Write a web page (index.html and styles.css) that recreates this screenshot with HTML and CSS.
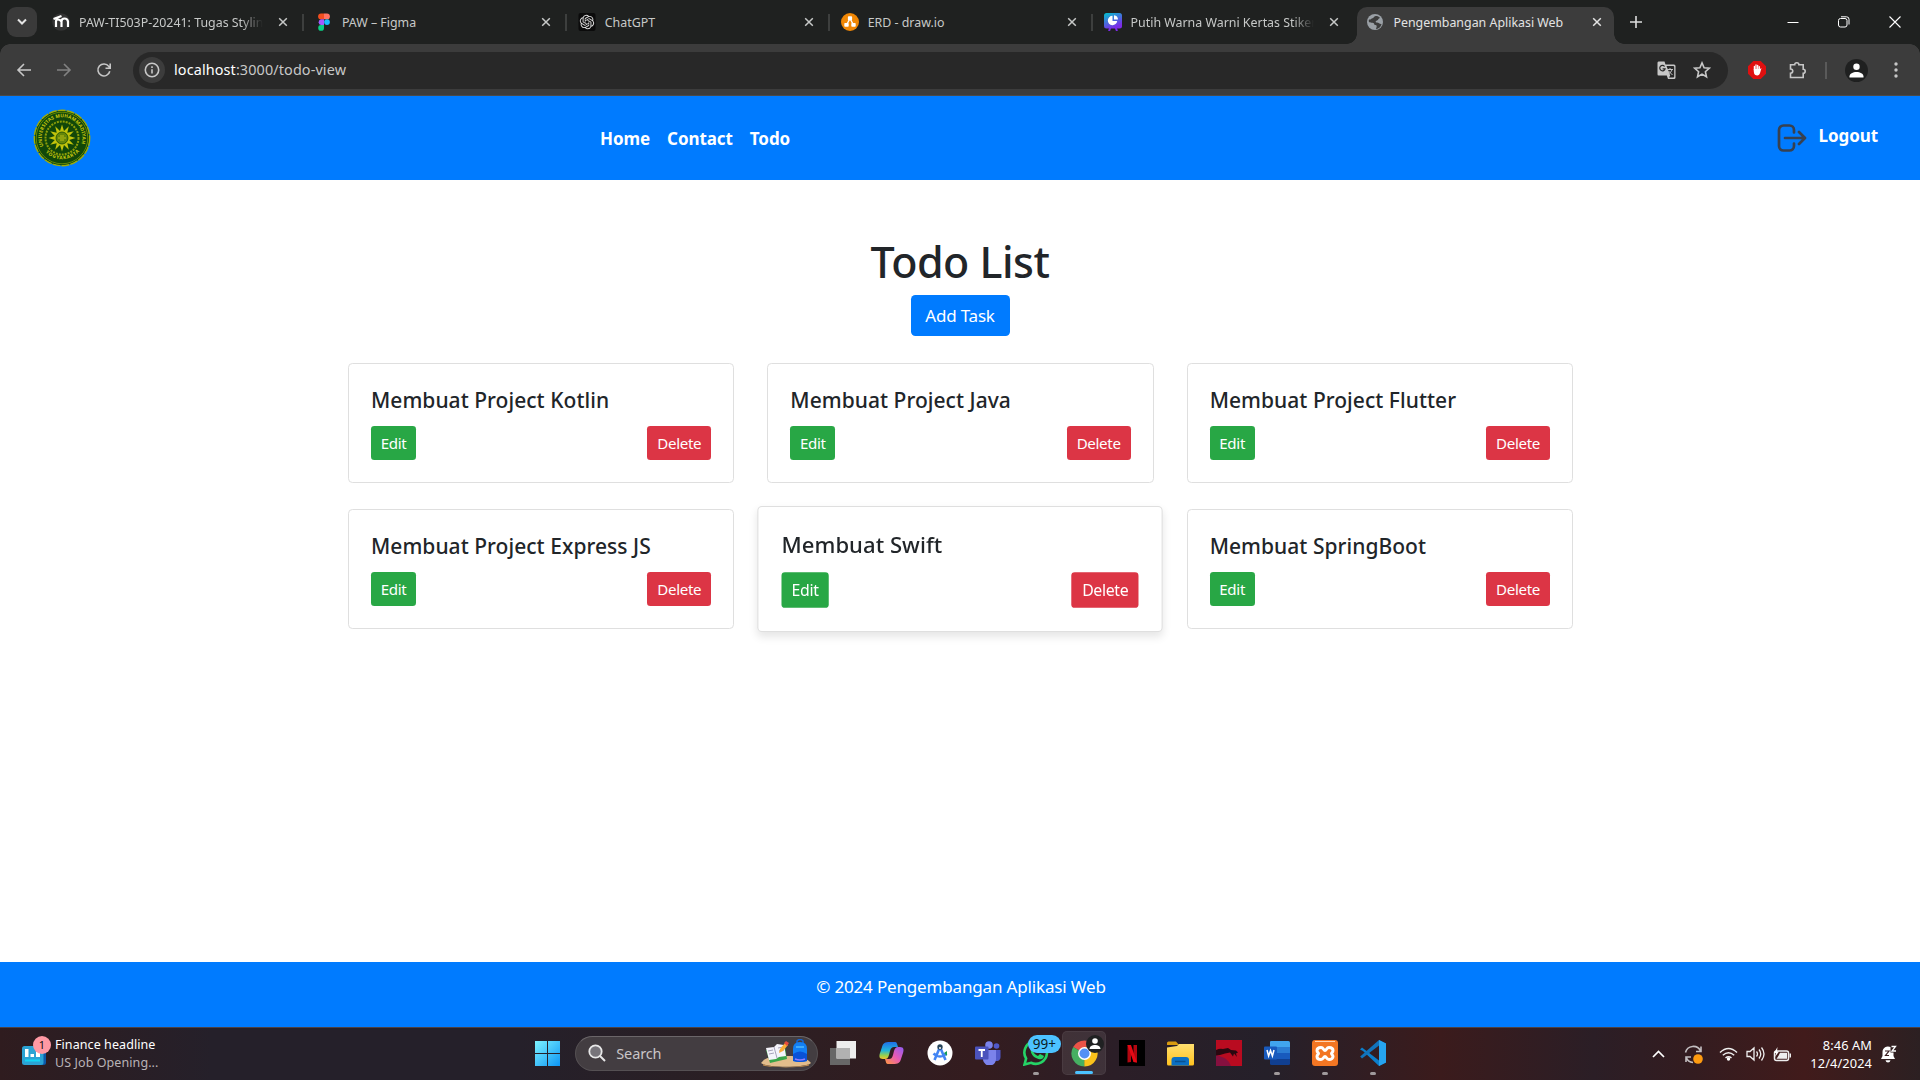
FILE: index.html
```html
<!DOCTYPE html>
<html lang="id">
<head>
<meta charset="utf-8">
<title>Pengembangan Aplikasi Web</title>
<link rel="stylesheet" href="styles.css">
</head>
<body>
<svg class="defs" width="0" height="0">
  <symbol id="x" viewBox="0 0 10 10"><path d="M1.2 1.2l7.6 7.6M8.8 1.2L1.2 8.8" stroke="currentColor" stroke-width="1.5" fill="none"/></symbol>
  <linearGradient id="gWin" x1="0" y1="0" x2="1" y2="1"><stop offset="0" stop-color="#7df3ff"/><stop offset="1" stop-color="#0c95f5"/></linearGradient>
  <linearGradient id="gCanva" x1="0" y1="0" x2=".5" y2="1"><stop offset="0" stop-color="#00c4cc"/><stop offset="1" stop-color="#7d2ae8"/></linearGradient>
  <linearGradient id="gCopA" x1="0" y1="0" x2="0" y2="1"><stop offset="0" stop-color="#1f6fe8"/><stop offset=".5" stop-color="#22b5d8"/><stop offset=".8" stop-color="#9bd14b"/><stop offset="1" stop-color="#f3c52e"/></linearGradient>
  <linearGradient id="gCopB" x1="1" y1="0" x2="0" y2="1"><stop offset="0" stop-color="#8f5cf5"/><stop offset=".5" stop-color="#e85ab4"/><stop offset="1" stop-color="#ff9a3c"/></linearGradient>
  <linearGradient id="gFold" x1="0" y1="0" x2="0" y2="1"><stop offset="0" stop-color="#ffdf70"/><stop offset="1" stop-color="#ffc21f"/></linearGradient>
</svg>

<div class="tabstrip">
  <div class="tab-search"><svg width="10" height="8" viewBox="0 0 10 8"><path d="M1 1.5l4 4 4-4" fill="none" stroke="#e3e3e3" stroke-width="2"/></svg></div>
  <div class="tabs">
    <div class="tab"><svg class="fav" viewBox="0 0 18 18"><circle cx="9" cy="9" r="8.800" fill="#333"/><path d="M4 14V8.500Q4 6.500 6 6.500T9.500 8.500V14M9.500 8.500Q9.500 5.500 12.500 5.500T16 8.500V14M1.500 6l8-3" fill="none" stroke="#fff" stroke-width="2.200"/></svg><span class="tab-title faded">PAW-TI503P-20241: Tugas Styling</span><svg class="close"><use href="#x"/></svg></div>
    <div class="tab"><svg class="fav" viewBox="0 0 18 18"><path d="M9 .5H6a2.900 2.900 0 0 0 0 5.800h3z" fill="#f24e1e"/><path d="M9 .5h3a2.900 2.900 0 0 1 0 5.800H9z" fill="#ff7262"/><path d="M9 6.300H6a2.900 2.900 0 0 0 0 5.700h3z" fill="#a259ff"/><circle cx="12" cy="9.100" r="2.900" fill="#1abcfe"/><path d="M9 12H6a2.900 2.900 0 1 0 3 2.900z" fill="#0acf83"/></svg><span class="tab-title">PAW – Figma</span><svg class="close"><use href="#x"/></svg></div>
    <div class="tab"><svg class="fav" viewBox="0 0 18 18"><rect x=".5" width="17" height="18" rx="2" fill="#0b0b0b"/><path transform="translate(1.800 1.800) scale(.6)" fill="#dcdcdc" d="M22.2819 9.8211a5.9847 5.9847 0 0 0-.5157-4.9108 6.0462 6.0462 0 0 0-6.5098-2.9A6.0651 6.0651 0 0 0 4.9807 4.1818a5.9847 5.9847 0 0 0-3.9977 2.9 6.0462 6.0462 0 0 0 .7427 7.0966 5.98 5.98 0 0 0 .511 4.9107 6.051 6.051 0 0 0 6.5146 2.9001A5.9847 5.9847 0 0 0 13.2599 24a6.0557 6.0557 0 0 0 5.7718-4.2058 5.9894 5.9894 0 0 0 3.9977-2.9001 6.0557 6.0557 0 0 0-.7475-7.0729zm-9.022 12.6081a4.4755 4.4755 0 0 1-2.8764-1.0408l.1419-.0804 4.7783-2.7582a.7948.7948 0 0 0 .3927-.6813v-6.7369l2.02 1.1686a.071.071 0 0 1 .038.052v5.5826a4.504 4.504 0 0 1-4.4945 4.4944zm-9.6607-4.1254a4.4708 4.4708 0 0 1-.5346-3.0137l.142.0852 4.783 2.7582a.7712.7712 0 0 0 .7806 0l5.8428-3.3685v2.3324a.0804.0804 0 0 1-.0332.0615L9.74 19.9502a4.4992 4.4992 0 0 1-6.1408-1.6464zM2.3408 7.8956a4.485 4.485 0 0 1 2.3655-1.9728V11.6a.7664.7664 0 0 0 .3879.6765l5.8144 3.3543-2.0201 1.1685a.0757.0757 0 0 1-.071 0l-4.8303-2.7865A4.504 4.504 0 0 1 2.3408 7.872zm16.5963 3.8558L13.1038 8.364 15.1192 7.2a.0757.0757 0 0 1 .071 0l4.8303 2.7913a4.4944 4.4944 0 0 1-.6765 8.1042v-5.6772a.79.79 0 0 0-.407-.667zm2.0107-3.0231l-.142-.0852-4.7735-2.7818a.7759.7759 0 0 0-.7854 0L9.409 9.2297V6.8974a.0662.0662 0 0 1 .0284-.0615l4.8303-2.7866a4.4992 4.4992 0 0 1 6.6802 4.66zM8.3065 12.863l-2.02-1.1638a.0804.0804 0 0 1-.038-.0567V6.0742a4.4992 4.4992 0 0 1 7.3757-3.4537l-.142.0805L8.704 5.459a.7948.7948 0 0 0-.3927.6813zm1.0976-2.3654l2.602-1.4998 2.6069 1.4998v2.9994l-2.5974 1.4997-2.6067-1.4997Z"/></svg><span class="tab-title">ChatGPT</span><svg class="close"><use href="#x"/></svg></div>
    <div class="tab"><svg class="fav" viewBox="0 0 18 18"><circle cx="9" cy="9" r="9" fill="#f08705"/><path d="M9 5.500l-3.500 6.500M9 5.500l3.500 6.500" stroke="#fff" stroke-width="1.400"/><rect x="6.900" y="3.300" width="4.200" height="4" rx=".8" fill="#fff"/><rect x="3.300" y="10" width="4.400" height="3.800" rx=".8" fill="#fff"/><rect x="10.300" y="10" width="4.400" height="3.800" rx=".8" fill="#fff"/></svg><span class="tab-title">ERD - draw.io</span><svg class="close"><use href="#x"/></svg></div>
    <div class="tab"><svg class="fav" viewBox="0 0 18 18"><path d="M6.500 14L5 18M11.500 14l1.500 4" stroke="#7d2ae8" stroke-width="2"/><rect width="18" height="15.500" rx="2.500" fill="url(#gCanva)"/><path d="M8.500 2.800a4.700 4.700 0 1 0 4.700 5.200H8.500z" fill="#fff"/><path d="M10 2.200a4.500 4.500 0 0 1 4 4.400h-4z" fill="#fff"/></svg><span class="tab-title faded">Putih Warna Warni Kertas Stiker</span><svg class="close"><use href="#x"/></svg></div>
    <div class="tab active"><svg class="fav" viewBox="0 0 18 18"><circle cx="9" cy="9" r="8" fill="#9aa0a6"/><path d="M10 3c-2 0-2 2-3.500 2.200S5 7 3 6.500c-1 3 1 3 3.500 3.200s1 2.200 3 2.300 1 2.500.5 4c3 0 5-2.500 5.500-5-2 .5-2.500-1.500-4.500-1.500s-1.500-1.500 0-2 1-2 3-2.500C13 3.500 11.500 3 10 3z" fill="#3c3c3c"/></svg><span class="tab-title">Pengembangan Aplikasi Web</span><svg class="close"><use href="#x"/></svg></div>
  </div>
  <svg class="newtab" width="12" height="12" viewBox="0 0 12 12"><path d="M6 0v12M0 6h12" stroke="#ddd" stroke-width="1.600"/></svg>
  <div class="winctl">
    <svg width="12" height="12" viewBox="0 0 12 12"><path d="M.5 6.500h11" stroke="#fff"/></svg>
    <svg width="12" height="12" viewBox="0 0 12 12"><g fill="none" stroke="#fff"><rect x=".5" y="2.500" width="8.500" height="8.500" rx="2"/><path d="M3 .8h5.500a2.500 2.500 0 0 1 2.500 2.500V8.500"/></g></svg>
    <svg width="12" height="12" viewBox="0 0 12 12"><path d="M.5.500l11 11M11.500.500l-11 11" stroke="#fff" stroke-width="1.100"/></svg>
  </div>
</div>

<div class="toolbar">
  <div class="tool-nav">
    <svg viewBox="0 0 16 16"><path d="M15 8H2M8 2L2 8l6 6" class="ln"/></svg>
    <svg viewBox="0 0 16 16" class="dim"><path d="M1 8h13M8 2l6 6-6 6" class="ln"/></svg>
    <svg viewBox="0 0 16 16"><path d="M13.800 9.300A6 6 0 1 1 12.800 4.400L14 6M14.200 1.500V6.200H9.500" class="ln"/></svg>
  </div>
  <div class="omnibox">
    <span class="info"><svg width="16" height="16" viewBox="0 0 16 16"><circle cx="8" cy="8" r="6.700" class="ln"/><path d="M8 7.200v4.300M8 4.200v1.700" class="ln"/></svg></span>
    <span class="url"><b>localhost</b>:3000/todo-view</span>
    <svg class="translate" width="19" height="19" viewBox="0 0 19 19"><path d="M1.500.500h6l1 3h8.500a1.500 1.500 0 0 1 1.500 1.500v11.500a1.500 1.500 0 0 1-1.500 1.500h-6l-1.200-3.500h-8A1.300 1.300 0 0 1 .5 13V2a1.500 1.500 0 0 1 1-1.500z" fill="#c7c7c7"/><path d="M9.500 5h6.700a1 1 0 0 1 1 1v9.500a1 1 0 0 1-1 1H12l1.200-2z" fill="#282828"/><path d="M7.600 5.500a2.700 2.700 0 1 0 .5 2.300H5.600" fill="none" stroke="#282828" stroke-width="1.200"/><path d="M10.500 8.500H16M13 7v1.500M15 8.500c-.5 2-2 3.500-3.500 4.500M11.500 10l4 4" fill="none" stroke="#c7c7c7"/></svg>
    <svg class="star" width="18" height="18" viewBox="0 0 18 18"><path d="M9 1.900l2.100 4.800 5.200.5-3.900 3.500 1.100 5.100L9 13.100l-4.500 2.700 1.100-5.100L1.700 7.200l5.200-.5z" class="ln"/></svg>
  </div>
  <svg class="adblock" width="18" height="18" viewBox="0 0 18 18"><path d="M5.300 0h7.400L18 5.300v7.400L12.700 18H5.300L0 12.700V5.300z" fill="#e01010"/><path d="M6.400 9V5.500M8 8.500V4M9.700 8.500V4.300M11.300 9V5.700" stroke="#fff" stroke-width="1.300" stroke-linecap="round"/><path d="M5.800 8h6.200l1.500-1-1.300 4.500c-.5 2-1.500 3-3 3s-3.400-1-3.400-4z" fill="#fff"/></svg>
  <svg class="puzzle" width="18" height="18" viewBox="0 0 18 18"><path d="M1.500 3.800h4.200a2.100 2.100 0 0 1 4.200 0h4.300v4.400a2 2 0 0 1 0 4v4.300H1.500v-4.200c3-.2 3-4.200 0-4.300z" class="ln"/></svg>
  <i class="tdiv"></i>
  <svg class="profile" width="23" height="23" viewBox="0 0 23 23"><circle cx="11.500" cy="11.500" r="11.500" fill="#1f2020"/><circle cx="11.500" cy="7.800" r="3.200" fill="#fff"/><path d="M4.500 17.500c0-6 14-6 14 0v1h-14z" fill="#fff"/></svg>
  <svg class="dots" width="4" height="16" viewBox="0 0 4 16"><g fill="#c7c7c7"><circle cx="2" cy="2" r="1.700"/><circle cx="2" cy="8" r="1.700"/><circle cx="2" cy="14" r="1.700"/></g></svg>
</div>

<header class="navbar">
  <svg class="seal" viewBox="0 0 58 58">
    <circle cx="29" cy="29" r="27.500" fill="#124709"/>
    <circle cx="29" cy="29" r="27.700" fill="none" stroke="#9eac08" stroke-width="1.400" stroke-dasharray="8 1"/>
    <circle cx="29" cy="29" r="25.800" fill="none" stroke="#769506" stroke-width=".8"/>
    <path id="arcTop" d="M10.500 37a20.300 20.300 0 1 1 37 0" fill="none"/>
    <path id="arcBot" d="M10.500 41a23 23 0 0 0 37 0" fill="none"/>
    <text class="seal-text"><textPath href="#arcTop" textLength="78">UNIVERSITAS MUHAMMADIYAH</textPath></text>
    <text class="seal-text"><textPath href="#arcBot" startOffset="3" textLength="38">YOGYAKARTA</textPath></text>
    <circle cx="29" cy="29" r="16.500" fill="none" stroke="#8b9d08" stroke-width="2" stroke-dasharray="2 1"/>
    <path d="M29 15.500l2 6.500 4.800-4.700-1.500 6.500 6.500-1.600-4.600 4.900 6.300 1.900-6.300 1.900 4.600 4.900-6.500-1.600 1.500 6.500L31 36l-2 6.500-2-6.500-4.800 4.700 1.500-6.500-6.500 1.600 4.600-4.900L15.500 29l6.300-1.900-4.600-4.900 6.500 1.600-1.500-6.500L27 22z" fill="#c2c30b"/>
    <circle cx="29" cy="29" r="6" fill="#66860a" stroke="#184b08" stroke-width=".8"/><path d="M25 29h8M27 27h4M27 31h4" stroke="#cfcc16" stroke-width=".8"/>
  </svg>
  <nav class="links"><a>Home</a><a>Contact</a><a>Todo</a></nav>
  <a class="logout"><svg width="30" height="28" viewBox="0 0 30 28"><path d="M17 8.500V6a4.500 4.500 0 0 0-4.500-4.500h-6A4.500 4.500 0 0 0 2 6v16a4.500 4.500 0 0 0 4.500 4.500h6A4.500 4.500 0 0 0 17 22v-2.500M8 14h19M22 8l6 6-6 6" fill="none" stroke="#374151" stroke-width="2.700" stroke-linecap="round" stroke-linejoin="round"/></svg><span>Logout</span></a>
</header>

<main class="page">
  <h1>Todo List</h1>
  <button class="add"><span>Add Task</span></button>
  <section class="cards">
    <article class="card"><h5>Membuat Project Kotlin</h5><div class="row"><button class="edit">Edit</button><button class="delete">Delete</button></div></article>
    <article class="card"><h5>Membuat Project Java</h5><div class="row"><button class="edit">Edit</button><button class="delete">Delete</button></div></article>
    <article class="card"><h5>Membuat Project Flutter</h5><div class="row"><button class="edit">Edit</button><button class="delete">Delete</button></div></article>
    <article class="card"><h5>Membuat Project Express JS</h5><div class="row"><button class="edit">Edit</button><button class="delete">Delete</button></div></article>
    <article class="card raised"><h5>Membuat Swift</h5><div class="row"><button class="edit">Edit</button><button class="delete">Delete</button></div></article>
    <article class="card"><h5>Membuat SpringBoot</h5><div class="row"><button class="edit">Edit</button><button class="delete">Delete</button></div></article>
  </section>
</main>

<footer class="footer"><span>© 2024 Pengembangan Aplikasi Web</span></footer>

<div class="taskbar">
  <div class="widgets">
    <div class="news"><svg width="24" height="20" viewBox="0 0 24 20"><rect x="4" y="2" width="20" height="17" rx="2.500" fill="#0c59a8"/><rect width="21.500" height="19" rx="2.500" fill="#2ba3d4"/><path d="M3 3h3.500v8H3zM8.500 8H12v3H8.500zM14 6h4v5h-4z" fill="#fff"/><path d="M3 14.500h15" stroke="#12d5f5" stroke-width="2"/></svg><span class="count">1</span></div>
    <div class="headline"><span class="h-a">Finance headline</span><span class="h-b">US Job Opening...</span></div>
  </div>
  <div class="apps">
    <div class="tile"><svg width="25" height="25" viewBox="0 0 25 25"><path d="M0 0h12v12H0zM13 0h12v12H13zM0 13h12v12H0zM13 13h12v12H13z" fill="url(#gWin)"/></svg></div>
    <div class="search"><svg width="18" height="18" viewBox="0 0 18 18"><circle cx="7.500" cy="7.500" r="6.200" fill="#77747a" stroke="#e8e8e8" stroke-width="1.800"/><path d="M12 12l5 5" stroke="#e8e8e8" stroke-width="2"/></svg><span>Search</span>
      <svg class="art" width="50" height="29" viewBox="0 0 50 29"><path d="M0 24c5-7 14-7 23-7s22 0 27 7c-5 5-45 5-50 0z" fill="#e2bd8c"/><path d="M2 25c8 4 38 4 46 0v1.500c-8 2.500-38 2.500-46 0z" fill="#b8884f"/><path d="M5 11l19-3 2 12-17 4z" fill="#3aa548"/><path d="M5 9l8-1 3-3 7 1 2 11-7 1-3 2-7 1z" fill="#f5f4fb"/><path d="M13 8l3 11M7 12l5-1M8 15l5-1M17 9l5-1M18 12l5-1" stroke="#a7a3bb" stroke-width="1" fill="none"/><path d="M18 14l1-4 5-6 3 2-5 6z" fill="#f9ad37"/><path d="M23 4l2-2 3 2-2 3z" fill="#e74b3c"/><path d="M36 4V2q3-3 6 0v2" fill="none" stroke="#1465d8" stroke-width="1.500"/><path d="M32 22V10q0-7 7-7t7 7v12q-7 2-14 0z" fill="#127ff4"/><path d="M32 15q7-5 14 0v7q-7 2-14 0z" fill="#0a51d6"/><path d="M35 8h8" stroke="#6fd6ff"/><path d="M34 20q5 2 10 0" stroke="#8d7bff" stroke-width="1.500" fill="none"/></svg>
    </div>
    <div class="tile"><svg width="26" height="24" viewBox="0 0 26 24"><rect y="7" width="20" height="17" fill="#676767"/><rect x="6.500" width="19.500" height="17.500" fill="#eee"/><rect x="6.500" y="7" width="13.500" height="10.500" fill="#b1b1b1"/></svg></div>
    <div class="tile"><svg width="25" height="24" viewBox="0 0 25 24"><path d="M11 1h5c2 0 2 2 3 5h-4c-2 0-3 1-4 4l-1 4c-1 3-2 4-4 4H4c-4 0-4-3-3-6l2-6c1-4 3-5 8-5z" fill="url(#gCopA)"/><path d="M14 23H9c-2 0-2-2-3-5h4c2 0 3-1 4-4l1-4c1-3 2-4 4-4h2c4 0 4 3 3 6l-2 6c-1 4-3 5-8 5z" fill="url(#gCopB)"/></svg></div>
    <div class="tile"><svg width="26" height="26" viewBox="0 0 26 26"><circle cx="13" cy="13" r="12.500" fill="#fff"/><path d="M13 7l-5.500 13M13 7l5.500 13M6.500 13.500c4 4 9 4 13 0" fill="none" stroke="#4285f4" stroke-width="2.600"/><path d="M17 13l3-2v5z" fill="#159b58"/><circle cx="13" cy="7" r="2.700" fill="#27455a"/><circle cx="13" cy="8" r="1" fill="#fff"/></svg></div>
    <div class="tile"><svg width="26" height="24" viewBox="0 0 26 24"><circle cx="21.500" cy="5" r="2.800" fill="#5059c9"/><path d="M18 9h7.500v7a4 4 0 0 1-7.500 2z" fill="#5059c9"/><circle cx="14" cy="4" r="3.800" fill="#7b83eb"/><path d="M7 9h14v8a6.500 6.500 0 0 1-13 2z" fill="#7b83eb"/><rect y="5.500" width="13.500" height="13" rx="1" fill="#4b53bc"/><path d="M3.500 9h6.500M6.750 9v7" stroke="#fff" stroke-width="1.800"/></svg></div>
    <div class="tile run"><svg width="27" height="26" viewBox="0 0 27 26"><path d="M1.500 24.500l1.600-6A11.300 11.300 0 1 1 8 22.800z" fill="none" stroke="#25d366" stroke-width="2.600"/><path d="M8 8c1-2 2-1 3 1l-1 2c1 3 3 4 5 5l2-2 4 2c-1 4-4 4-8 2s-6-6-5-10z" fill="#25d366"/></svg><span class="badge">99+</span></div>
    <div class="tile chrome"><svg width="27" height="27" viewBox="0 0 27 27"><path d="M13.500 13.500L2.200 7A13 13 0 0 1 24.800 7z" fill="#e94235"/><path d="M13.500 13.500L24.800 7A13 13 0 0 1 13.500 26.500z" fill="#fbbc05"/><path d="M13.500 13.500v13A13 13 0 0 1 2.200 7z" fill="#34a853"/><path d="M13.500 7h11.300L19.500 17l-6 9.500z" fill="#fbbc05"/><circle cx="13.500" cy="13.500" r="6.500" fill="#fff"/><circle cx="13.500" cy="13.500" r="5" fill="#4285f4"/></svg><svg class="user" width="18" height="18" viewBox="0 0 18 18"><circle cx="9" cy="9" r="9" fill="#202122"/><circle cx="9" cy="6" r="2.800" fill="#fff"/><path d="M3.500 14c0-5.500 11-5.500 11 0z" fill="#fff"/></svg></div>
    <div class="tile"><svg width="26" height="26" viewBox="0 0 26 26"><rect width="26" height="26"/><path d="M8.500 5H12v17l-3.500.5zM14.500 5H18v17.500l-3.500-.5z" fill="#b20710"/><path d="M8.500 5H12l6 17.500-3.500-.5z" fill="#e50914"/></svg></div>
    <div class="tile"><svg width="27" height="25" viewBox="0 0 27 25"><path d="M0 2q0-1.500 1.500-1.500H9L12 4H0z" fill="#d99b10"/><path d="M0 6.500L10 5l2-2h15v20q0 1.500-1.500 1.500h-24Q0 24.500 0 23z" fill="url(#gFold)"/><path d="M4.500 24.500V19q0-3 3-3H19q3 0 3 3v5.500z" fill="#0b70c4"/><path d="M8 20.500h10.500" stroke="#08508f" stroke-width="1.500"/></svg></div>
    <div class="tile"><svg width="26" height="26" viewBox="0 0 26 26"><rect width="26" height="26" fill="#b90b20"/><path d="M0 15q7 2 10 4t5 7H0z" fill="#85103f"/><path d="M0 10q4-2 7-1l5-1 3 2 5 .5 2 2-2 1 1 3.500-3-3.500-1 3-3-4-5 1-5 1.500-4 .5z" fill="#2a0810"/></svg></div>
    <div class="tile run"><svg width="26" height="24" viewBox="0 0 26 24"><path d="M7 0h17.500Q26 0 26 1.500V6H6V1q0-1 1-1z" fill="#41a5ee"/><path d="M6 6h20v6H6z" fill="#2b7cd3"/><path d="M6 12h20v6H6z" fill="#185abd"/><path d="M6 18h20v4.500q0 1.500-1.500 1.500h-17Q6 24 6 22.500z" fill="#103f91"/><rect y="5.500" width="13" height="13" rx="1" fill="#185abd"/><path d="M3 9l1.600 6L6.500 9.500 8.400 15 10 9" fill="none" stroke="#fff" stroke-width="1.500"/></svg></div>
    <div class="tile run"><svg width="26" height="26" viewBox="0 0 26 26"><rect width="26" height="26" rx="3" fill="#f37623"/><path d="M3 1.500h20" stroke="#ffd3af"/><path d="M9 7.500c2.500 0 2.500 3 4 3s1.500-3 4-3 4 1 4 3-1.500 2-1.500 3 1.500 1.500 1.500 3-1.500 3-4 3-2.500-3-4-3-1.500 3-4 3-4-1-4-3 1.500-2 1.500-3S5 12.500 5 10.500s1.500-3 4-3z" fill="none" stroke="#fff" stroke-width="3"/></svg></div>
    <div class="tile run"><svg width="27" height="26" viewBox="0 0 27 26"><path d="M19 0l7 3.500v19L19 26 3 11 0 9.500 2 7.500 19 20.500z" fill="#0b7fcc"/><path d="M19 0v5.500L2 18.500.2 16.500z" fill="#1173bb"/><path d="M19 0l7 3.500v19L19 26z" fill="#26a4f0"/></svg></div>
  </div>
  <div class="tray">
    <svg class="chev" width="13" height="8" viewBox="0 0 13 8"><path d="M1 7l5.500-5.500L12 7" fill="none" stroke="#fff" stroke-width="1.700"/></svg>
    <svg class="sync" width="19" height="19" viewBox="0 0 19 19"><path d="M1.500 7.500A8 8 0 0 1 16.500 6M17 1.500V6.500H12M2 17v-5h5M2.500 13q1.500 4 6.500 4.500" fill="none" stroke="#c3bfc1" stroke-width="1.600"/><circle cx="14" cy="14" r="4.800" fill="#ff9b10"/></svg>
    <svg class="wifi" width="19" height="14" viewBox="0 0 19 14"><path d="M1 5.500q8.500-8 17 0M3.800 8.300q5.700-5 11.400 0M6.500 11q3-2.500 6 0" fill="none" stroke="#eee" stroke-width="1.500"/><circle cx="9.500" cy="12" r="1.700" fill="#fff"/></svg>
    <svg class="vol" width="19" height="16" viewBox="0 0 19 16"><path d="M1 5.500h3L8 2v12L4 10.500H1zM10.500 5.500q2 2.500 0 5M13 3.500q3.500 4.500 0 9M15.500 1.500q5 6.500 0 13" fill="none" stroke="#eee" stroke-width="1.300"/></svg>
    <svg class="batt" width="19" height="15" viewBox="0 0 19 15"><rect x="1.500" y="4" width="14" height="9.500" rx="2" fill="none" stroke="#eee" stroke-width="1.500"/><path d="M7 5.700h7v6H3.500l2-3zM16.500 6.500H18v4h-1.500z" fill="#eee"/><path d="M4.500 0L1 6h2l-1 4 4-5.500H4z" fill="#fff"/></svg>
    <div class="clock"><span>8:46 AM</span><span>12/4/2024</span></div>
    <svg class="bell" width="17" height="18" viewBox="0 0 17 18"><path d="M1 14l1.500-3V7a5.500 5.500 0 0 1 8-5v5.500h3V11L15 14zM5.500 15.200h5q-.5 2.300-2.500 2.300t-2.500-2.300z" fill="#fff"/><path d="M5 6h4L5.500 10.500H9" fill="none" stroke="#3a1d1f" stroke-width="1.200"/><path d="M11.500 1.500h4L12 6h4" fill="none" stroke="#fff" stroke-width="1.300"/></svg>
  </div>
</div>
</body>
</html>
```
FILE: styles.css
```css
* { box-sizing: border-box; }
body {
  margin: 0; width: 1920px; height: 1080px; overflow: hidden;
  display: flex; flex-direction: column;
  font-family: "Noto Sans", "Open Sans", sans-serif;
  background: #fff; color: #212529;
}
svg { display: block; flex: none; }
.defs { position: absolute; }
button { font-family: inherit; border: 0; margin: 0; color: #fff; }
.ln { fill: none; stroke: #c7c7c7; stroke-width: 1.6; }

/* Browser tab strip */
.tabstrip { height: 44px; flex: none; background: #1f2120; display: flex; align-items: center; padding-left: 7px; color: #c7c9c8; }
.tab-search { width: 30px; height: 30px; border-radius: 9px; background: #3a3a3a; display: grid; place-items: center; }
.tabs { display: flex; align-self: stretch; padding-left: 3px; }
.tab { width: 262.9px; display: flex; align-items: center; padding: 0 15px 0 12px; position: relative; }
.tab:nth-child(-n+4)::after { content: ""; position: absolute; right: -1px; top: 14px; width: 2px; height: 17px; background: #3d3f3e; }
.fav { width: 18px; height: 18px; margin-right: 9px; }
.tab-title { flex: 1; min-width: 0; font-size: 12.4px; line-height: 18px; padding-top: 2px; white-space: nowrap; overflow: hidden; margin-right: 15px; letter-spacing: 0; }
.close { width: 10px; height: 10px; }
.faded { -webkit-mask-image: linear-gradient(90deg, #000 88%, transparent); mask-image: linear-gradient(90deg, #000 88%, transparent); }
.active { color: #e3e3e3; z-index: 0; }
.active::before { content: ""; position: absolute; z-index: -1; left: 3px; right: 3px; top: 7px; bottom: 0; background: #3c3c3c; border-radius: 10px 10px 0 0; }
.active::after {
  content: ""; position: absolute; z-index: -1; left: -7px; right: -7px; bottom: 0; height: 10px;
  background:
    radial-gradient(circle at 0 0, transparent 9.5px, #3c3c3c 10px) left / 10px 10px no-repeat,
    radial-gradient(circle at 100% 0, transparent 9.5px, #3c3c3c 10px) right / 10px 10px no-repeat;
}
.newtab { margin-left: 13px; }
.winctl { margin-left: auto; display: flex; gap: 39px; padding-right: 19px; }

/* Address toolbar */
.toolbar {
  height: 52px; flex: none; display: flex; align-items: center; padding-left: 16px; box-shadow: inset 0 -1px #4a4a4a;
  background:
    radial-gradient(circle at 100% 100%, #3c3c3c 9.5px, #1f2120 10px) left top / 10px 10px no-repeat,
    radial-gradient(circle at 0 100%, #3c3c3c 9.5px, #1f2120 10px) right top / 10px 10px no-repeat,
    #3c3c3c;
}
.tool-nav { display: flex; gap: 24px; width: 117px; }
.tool-nav svg { width: 16px; height: 16px; }
.dim { opacity: .5; }
.omnibox { width: 1595px; height: 37px; border-radius: 19px; background: #282828; display: flex; align-items: center; padding: 0 17px 0 6px; }
.info { width: 26px; height: 26px; border-radius: 50%; background: #3c3c3c; display: grid; place-items: center; }
.url { margin-left: 9px; font-size: 14.4px; letter-spacing: .12px; color: #c7c7c7; line-height: 20px; }
.url b { font-weight: 400; color: #fff; }
.translate { margin-left: auto; }
.star { margin-left: 17px; }
.adblock { margin-left: 20px; }
.puzzle { margin-left: 23px; }
.tdiv { width: 2px; height: 17px; background: #5a5a5a; margin-left: 18px; }
.profile { margin-left: 18px; }
.dots { margin-left: 26px; }

/* Site header */
.navbar { height: 84px; flex: none; background: #007bff; color: #fff; display: flex; align-items: center; padding: 0 42px 0 33px; font-weight: 700; font-size: 17px; }
.seal { width: 58px; height: 58px; }
.seal-text { font: 700 4.8px "Noto Sans", sans-serif; fill: #c9c80d; }
.links { display: flex; gap: 17px; margin-left: 509px; }
.links a, .logout span { letter-spacing: -.08px; }
.logout { margin-left: auto; display: flex; align-items: center; gap: 12px; }
.logout span { position: relative; top: -3px; }

/* Task list */
.page { flex: 1; display: flex; flex-direction: column; align-items: center; padding-top: 55px; }
h1 { margin: 0; font-size: 43px; line-height: 53px; font-weight: 500; letter-spacing: -.5px; }
.add { margin-top: 7px; width: 99px; height: 41px; padding: 0; border-radius: 4.4px; background: #007bff; font-size: 17px; letter-spacing: -.2px; }
.cards { width: 1225px; margin: 27px 0 0 1px; display: grid; grid-template-columns: repeat(3, 1fr); gap: 26.5px 33px; }
.card { height: 119.5px; border: 1px solid #dfdfdf; border-radius: 4.4px; background: #fff; padding: 23px 22px 22px; }
.card h5 { margin: 0 0 13px; font-size: 21px; line-height: 26px; font-weight: 500; letter-spacing: .04px; white-space: nowrap; }
.row { display: flex; justify-content: space-between; }
.row button { height: 34px; padding: 0; border-radius: 3.3px; font-size: 15.1px; letter-spacing: -.32px; }
.row .edit { width: 45px; background: #28a745; }
.row .delete { width: 64px; background: #dc3545; }
.raised { transform: scale(1.05); box-shadow: 0 4px 8px rgba(0,0,0,.1); }

.footer { height: 65px; flex: none; background: #007bff; color: #fff; text-align: center; font-size: 17px; line-height: 26px; padding: 12px 0 0 2px; letter-spacing: -.16px; }

/* Desktop taskbar */
.taskbar {
  height: 53px; flex: none; border-top: 1px solid #4a4145; color: #fff;
  display: grid; grid-template-columns: 523.5px auto 1fr; align-items: center;
  background: linear-gradient(90deg, #2f1c1f 0, #25202a 11%, #25202a 27%, #2a1f24 37%, #341c1f 51%, #2b1e27 58%, #25202a 66%, #3b1b1c 75%, #2b1e26 83%, #331c20 88%, #411b1b 94%, #2c2022 100%);
}
.widgets { display: flex; align-items: center; padding-left: 22px; }
.news { position: relative; padding-top: 4px; width: 33px; }
.count { position: absolute; left: 11px; top: -6px; width: 18px; height: 18px; border-radius: 50%; background: #ff99a4; color: #111; font-size: 11px; line-height: 18px; text-align: center; }
.headline { display: flex; flex-direction: column; font-size: 12.5px; line-height: 18px; letter-spacing: .08px; }
.h-b { color: #b9b3b6; }
.apps { display: flex; align-items: center; margin-top: -2px; }
.tile { width: 48.2px; height: 44px; display: grid; place-items: center; position: relative; }
.run::after, .chrome::after { content: ""; position: absolute; bottom: 0; width: 6px; height: 3px; border-radius: 2px; background: #a09a9c; }
.chrome::after { width: 18px; background: #4cc2ff; bottom: 1px; }
.chrome::before { content: ""; position: absolute; inset: 0 2px; border-radius: 5px; background: rgba(255,255,255,.09); border: 1px solid rgba(255,255,255,.05); }
.user { position: absolute; left: 26px; top: 4px; }
.badge { position: absolute; left: 16px; top: 4px; width: 33px; height: 18px; border-radius: 9px; background: #4cc2ff; color: #0b1a24; font-size: 13.5px; line-height: 18px; text-align: center; z-index: 1; }
.search { width: 243px; height: 35px; margin: 0 1px 0 3.5px; border-radius: 18px; background: #433d41; border: 1px solid #555053; border-top-color: #6b6669; display: flex; align-items: center; padding: 0 6px 0 12px; font-size: 14.5px; letter-spacing: -.1px; color: #c9c5c7; }
.search span { margin-left: 10px; }
.art { margin-left: auto; }
.tray { display: flex; align-items: center; justify-content: flex-end; padding-right: 23px; }
.sync { margin-left: 19px; }
.wifi { margin-left: 16px; }
.vol { margin-left: 8px; }
.batt { margin-left: 8px; }
.clock { width: 80px; display: flex; flex-direction: column; align-items: flex-end; font-size: 12.8px; line-height: 18px; letter-spacing: .1px; }
.bell { margin-left: 8px; }
```
